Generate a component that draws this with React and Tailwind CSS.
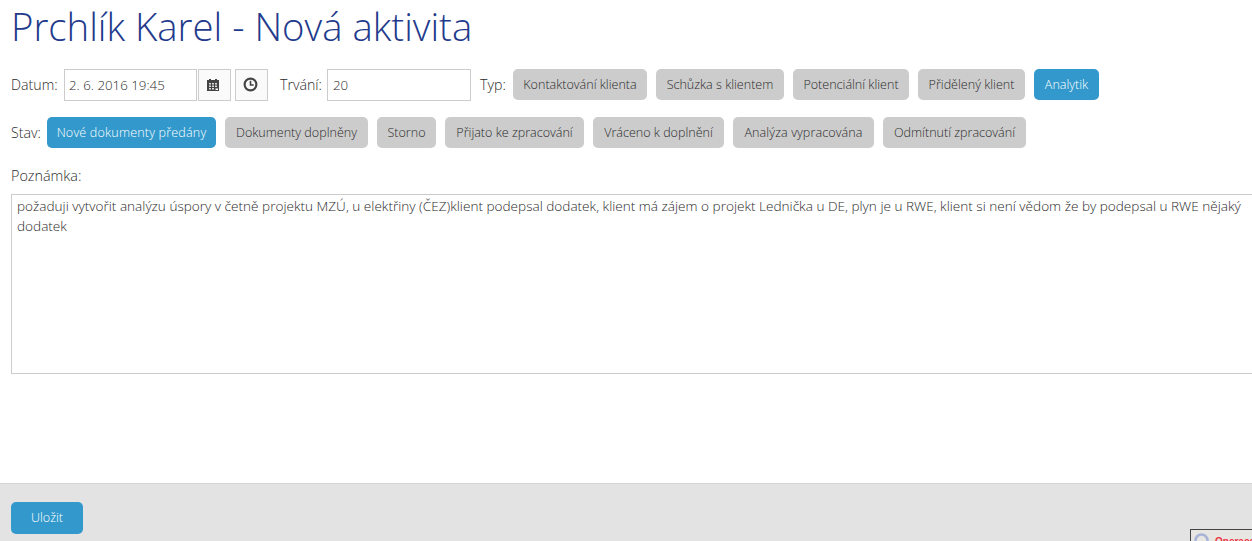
import React from "react";

const Btn = ({ children, active, w }) => (
  <span className={`flex h-[31px] shrink-0 items-center justify-center whitespace-nowrap rounded-[5px] pt-[1px] text-[12.550px] ${w} ${active ? "bg-[#3399cc] text-white" : "bg-[#cccccc] text-[#2b2b2b]"}`}>
    {children}
  </span>
);

export default function App() {
  return (
    <div className="relative flex h-[541px] w-[1252px] flex-col overflow-hidden bg-white font-['Open_Sans',sans-serif] font-light text-[#2b2b2b]">
      <div className="h-[483px] pl-[11px]">
        <h1 className="h-[69px] pt-[2px] text-[38.350px] leading-[48px] font-light text-[#223a8c]">Prchlík Karel - Nová aktivita</h1>
        <div className="flex h-[32px] items-start text-[14.200px]">
          <span className="flex h-[32px] w-[53px] items-center">Datum:</span>
          <span className="flex h-[32px] w-[133px] items-center border border-[#cccccc] pt-[2px] pl-[4px] text-[13.300px]">2. 6. 2016 19:45</span>
          <span className="ml-[1px] flex h-[32px] w-[33px] items-center justify-center border border-[#cccccc] bg-[#fafafa] pr-[3px]">
            <svg width="14" height="14" viewBox="0 0 14 14"><path fill="#444" d="M1 2h2V1h2v1h4V1h2v1h2v11H1z"/><path fill="#ddd" d="M3 5h2v1.500H3zM6 5h2v1.500H6zM9 5h2v1.500H9zM3 7.500h2V9H3zM6 7.500h2V9H6zM9 7.500h2V9H9zM3 10h2v1.500H3zM6 10h2v1.500H6z"/><path fill="#fff" d="M9.500 10.500H12V12H9.500z"/></svg>
          </span>
          <span className="ml-[4px] flex h-[32px] w-[33px] items-center justify-center border border-[#cccccc] bg-[#fafafa] pr-[3px] pb-[1px]">
            <svg width="15" height="15" viewBox="0 0 14 14" fill="none" stroke="#444"><circle cx="7" cy="7" r="5.500" strokeWidth="2"/><path d="M7 3.500V7.500H10" strokeWidth="1.500"/></svg>
          </span>
          <span className="ml-[12px] flex h-[32px] w-[47px] items-center">Trvání:</span>
          <span className="flex h-[32px] w-[144px] items-center border border-[#cccccc] pt-[2px] pl-[5px] text-[13.300px]">20</span>
          <span className="ml-[9px] flex h-[32px] w-[33px] items-center">Typ:</span>
          <div className="flex gap-[9px]">
            <Btn w="w-[134px]">Kontaktování klienta</Btn>
            <Btn w="w-[128px]">Schůzka s klientem</Btn>
            <Btn w="w-[116px]">Potenciální klient</Btn>
            <Btn w="w-[107px]">Přidělený klient</Btn>
            <Btn w="w-[65px]" active>Analytik</Btn>
          </div>
        </div>
        <div className="mt-[16px] flex h-[31px] items-center text-[14.200px]">
          <span className="w-[36px]">Stav:</span>
          <div className="flex gap-[9px]">
            <Btn w="w-[169px] tracking-[0.18px]" active>Nové dokumenty předány</Btn>
            <Btn w="w-[143px]">Dokumenty doplněny</Btn>
            <Btn w="w-[59px]">Storno</Btn>
            <Btn w="w-[139px]">Přijato ke zpracování</Btn>
            <Btn w="w-[131px]">Vráceno k doplnění</Btn>
            <Btn w="w-[141px] tracking-[0.1px]">Analýza vypracována</Btn>
            <Btn w="w-[143px]">Odmítnutí zpracování</Btn>
          </div>
        </div>
        <div className="mt-[18px] text-[14.400px] leading-[19px]">Poznámka:</div>
        <div className="mt-[9px] h-[180px] w-[1260px] border border-[#cccccc] px-[5px] pt-[1px] text-[13.580px] leading-[20px] whitespace-nowrap">
          požaduji vytvořit analýzu úspory v četně projektu MZÚ, u elektřiny (ČEZ)klient podepsal dodatek, klient má zájem o projekt Lednička u DE, plyn je u RWE, klient si není vědom že by podepsal u RWE nějaký<br />dodatek
        </div>
      </div>
      <div className="h-[58px] border-t border-[#d4d4d4] bg-[#e3e3e3] pl-[11px] pt-[18px]">
        <span className="flex h-[32px] w-[72px] items-center justify-center rounded-[5px] bg-[#3399cc] pt-[1px] text-[12.550px] text-white">Uložit</span>
      </div>
      <div className="absolute left-[1190px] top-[529px] flex h-[30px] w-[80px] border border-[#444444] bg-[#e8e6e2] pl-[3px] pt-[3px]">
        <svg width="15" height="15" viewBox="0 0 15 15" fill="none" className="shrink-0"><circle cx="7.500" cy="7.500" r="6" stroke="#a8b4d8" strokeWidth="2.500"/></svg>
        <span className="ml-[6px] mt-[3px] font-['Liberation_Sans',sans-serif] text-[10px] leading-[12px] font-bold text-[#ee3344]">Operace</span>
      </div>
    </div>
  );
}
